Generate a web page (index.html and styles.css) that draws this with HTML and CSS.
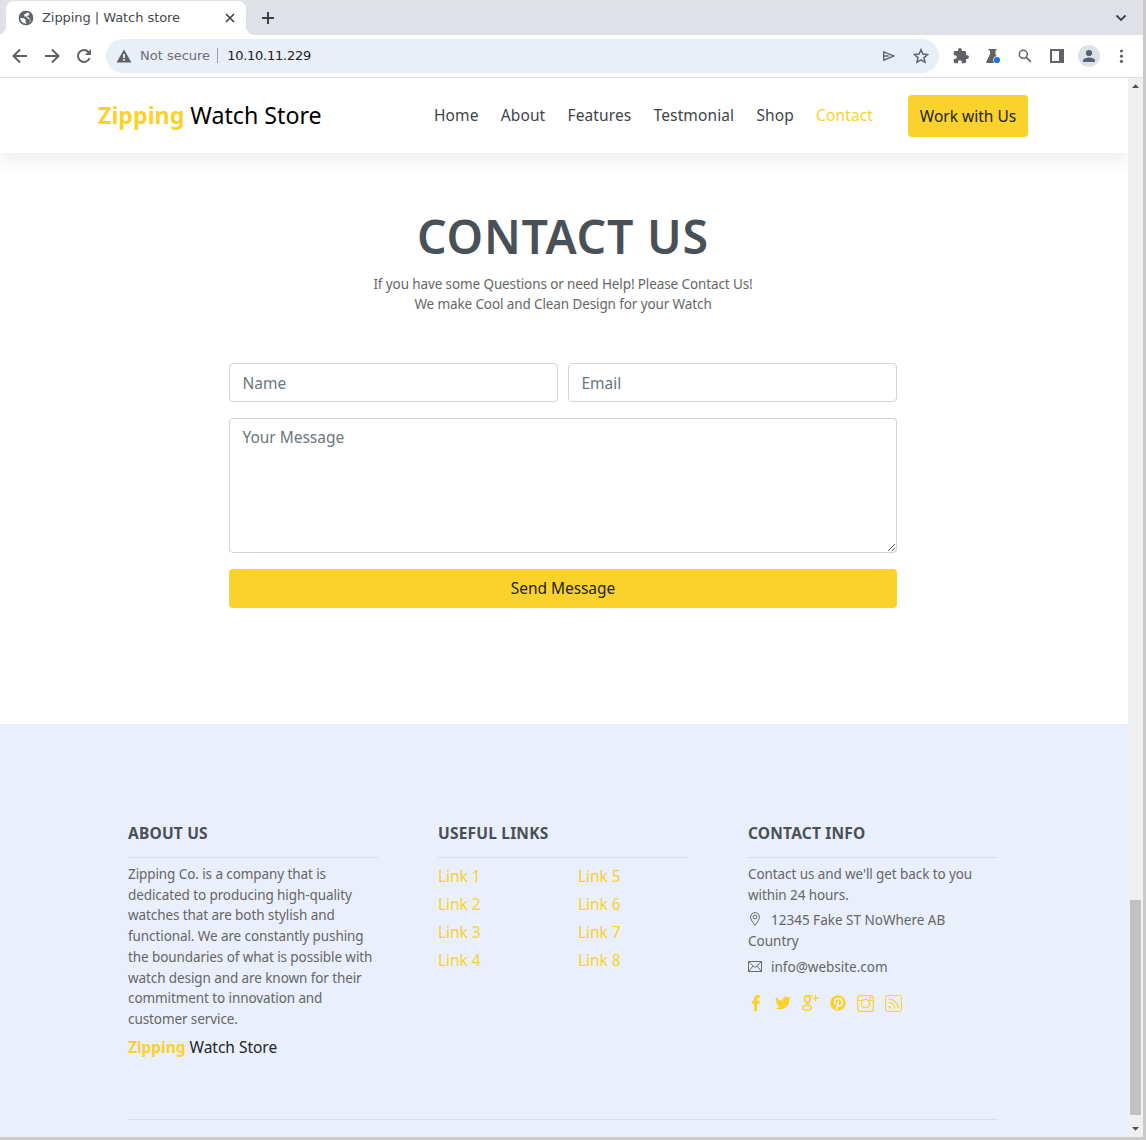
FILE: index.html
```html
<!DOCTYPE html>
<html lang="en">
<head>
<meta charset="utf-8">
<title>Zipping | Watch store</title>
<link rel="stylesheet" href="styles.css">
</head>
<body>
<div class="window">
  <div class="tabstrip">
    <div class="tab">
      <svg class="globe" width="16" height="16" viewBox="0 0 16 16"><circle cx="8" cy="8" r="7.2" fill="#5f6368"/><path d="M9.5 1.2 8.3 3.6 6.4 4.3 6.2 6.5 8.2 6.6 9.6 8.4 12 9.4 11.8 11.6 10.600 13.400 13.200 11.500 11.200 7.800 9.400 7 8.800 5.800 10.800 5.600 11.4 4.2 11.400 2z" fill="#fff"/><path d="M1.6 7.8 5.6 8.3 7.6 9.6 7.5 11.4 8.500 13.800 5.6 14.2 3 12.5z" fill="#fff"/><circle cx="8" cy="8" r="6.5" fill="none" stroke="#5f6368" stroke-width="1.500"/></svg>
      <span class="tab-title">Zipping | Watch store</span>
      <svg class="tab-close" width="10" height="10" viewBox="0 0 10 10"><path d="M1 1l8 8M9 1L1 9" stroke="#3c4043" stroke-width="1.6"/></svg>
    </div>
    <svg class="tab-new" width="14" height="14" viewBox="0 0 14 14"><path d="M7 1v12M1 7h12" stroke="#3c4043" stroke-width="2"/></svg>
    <svg class="tab-search" width="12" height="8" viewBox="0 0 12 8"><path d="M1.5 1.5 6 6l4.500-4.500" fill="none" stroke="#3c4043" stroke-width="1.8"/></svg>
  </div>
  <div class="toolbar">
    <svg class="nav-ic" width="16" height="16" viewBox="0 0 16 16"><path d="M15 8H2M8 1.500 1.500 8 8 14.500" fill="none" stroke="#5f6368" stroke-width="2"/></svg>
    <svg class="nav-ic" width="16" height="16" viewBox="0 0 16 16"><path d="M1 8h13M8 1.500 14.500 8 8 14.500" fill="none" stroke="#5f6368" stroke-width="2"/></svg>
    <svg class="nav-ic" width="16" height="16" viewBox="0 0 16 16"><path d="M13.600 10A6 6 0 1 1 12.500 4" fill="none" stroke="#5f6368" stroke-width="2"/><path d="M15 1v6H9z" fill="#5f6368"/></svg>
    <div class="omnibox">
      <svg width="16" height="14" viewBox="0 0 16 14"><path d="M8 .5 15.500 13.500H.5z" fill="#5f6368"/><path d="M7.200 5h1.600v4H7.200zM7.200 10h1.600v1.700H7.200z" fill="#fff"/></svg>
      <span class="insecure">Not secure</span>
      <span class="url">10.10.11.229</span>
      <svg class="send" width="12" height="10" viewBox="0 0 12 10"><path d="M.7.8 11 5 .7 9.200z M.7 5h5" fill="none" stroke="#5f6368" stroke-width="1.400"/></svg>
      <svg width="16" height="16" viewBox="0 0 24 24"><path d="M12 2.500 14.800 9l7 .7-5.300 4.700 1.500 7L12 17.700 6 21.400l1.500-7L2.200 9.700l7-.7z" fill="none" stroke="#5f6368" stroke-width="2.200"/></svg>
    </div>
    <div class="actions">
      <svg width="16" height="16" viewBox="1 1 22 22"><path d="M20.500 11H19V7c0-1.100-.9-2-2-2h-4V3.500a2.500 2.500 0 0 0-5 0V5H4c-1.100 0-2 .9-2 2v3.800h1.500a2.700 2.700 0 0 1 0 5.400H2V20c0 1.100.9 2 2 2h3.800v-1.500a2.700 2.700 0 0 1 5.400 0V22H17c1.100 0 2-.9 2-2v-4h1.500a2.500 2.500 0 0 0 0-5z" fill="#5f6368"/></svg>
      <svg width="16" height="16" viewBox="0 0 16 16"><path d="M3.500 1h8v1.500h-1V6l3.500 8q.3 1-.8 1H2Q.9 15 1.200 14L5 6V2.500H3.500z" fill="#5f6368"/><circle cx="12" cy="12" r="3.700" fill="#fff"/><circle cx="12" cy="12" r="3.100" fill="#1a73e8"/></svg>
      <svg width="16" height="16" viewBox="0 0 16 16"><circle cx="6.300" cy="6.300" r="4" fill="none" stroke="#5f6368" stroke-width="1.500"/><path d="M9.300 9.300 13.800 13.800" stroke="#5f6368" stroke-width="1.700"/></svg>
      <svg width="16" height="16" viewBox="0 0 16 16"><path d="M1 1h14v14H1zM3 3v10h7V3z" fill="#5f6368" fill-rule="evenodd"/></svg>
      <span class="avatar"><svg width="14" height="14" viewBox="0 0 14 14"><circle cx="7" cy="4" r="3.100" fill="#56617a"/><path d="M1 13v-1.500C1 9.500 4.500 8.500 7 8.500s6 1 6 3V13z" fill="#56617a"/></svg></span>
      <svg width="16" height="16" viewBox="0 0 16 16" fill="#5f6368"><circle cx="8.500" cy="3" r="1.600"/><circle cx="8.500" cy="8.200" r="1.600"/><circle cx="8.500" cy="13.400" r="1.600"/></svg>
    </div>
  </div>
  <div class="viewport">
    <div class="page">
      <header class="site-header">
        <a class="logo"><b>Zipping</b> Watch Store</a>
        <nav class="menu">
          <a>Home</a><a>About</a><a>Features</a><a>Testmonial</a><a>Shop</a><a class="active">Contact</a>
        </nav>
        <a class="cta">Work with Us</a>
      </header>
      <main class="contact">
        <h1>CONTACT US</h1>
        <p class="lead">If you have some Questions or need Help! Please Contact Us!<br>We make Cool and Clean Design for your Watch</p>
        <form class="form">
          <input class="field" type="text" placeholder="Name">
          <input class="field" type="text" placeholder="Email">
          <textarea class="field message" placeholder="Your Message"></textarea>
          <button class="submit" type="button">Send Message</button>
        </form>
      </main>
      <footer class="footer">
        <div class="columns">
          <section>
            <h2>ABOUT US</h2>
            <p>Zipping Co. is a company that is<br>dedicated to producing high-quality<br>watches that are both stylish and<br>functional. We are constantly pushing<br>the boundaries of what is possible with<br>watch design and are known for their<br>commitment to innovation and<br>customer service.</p>
            <a class="brand"><b>Zipping</b> Watch Store</a>
          </section>
          <section>
            <h2>USEFUL LINKS</h2>
            <div class="links">
              <a>Link 1</a><a>Link 5</a><a>Link 2</a><a>Link 6</a><a>Link 3</a><a>Link 7</a><a>Link 4</a><a>Link 8</a>
            </div>
          </section>
          <section>
            <h2>CONTACT INFO</h2>
            <p>Contact us and we'll get back to you<br>within 24 hours.</p>
            <p class="info"><svg width="14" height="14" viewBox="0 0 14 14" fill="none" stroke="#6b6b6b"><path d="M7 13.400C5 10.500 2.600 7.800 2.600 5a4.400 4.400 0 0 1 8.800 0c0 2.800-2.400 5.500-4.400 8.400z"/><circle cx="7" cy="5" r="1.900"/></svg>12345 Fake ST NoWhere AB<br>Country</p>
            <p class="info"><svg width="14" height="14" viewBox="0 0 14 14" fill="none" stroke="#6b6b6b"><path d="M.5 2.500h13v10H.5zM.5 2.500 7 8.500l6.500-6M.5 12.500 5 7M13.500 12.500 9 7"/></svg>info@website.com</p>
            <div class="social">
              <svg width="16" height="16" viewBox="0 0 16 16"><path d="M6 16V8.700H3.900V5.800H6V4c0-2.600 1.300-4 3.700-4h2v2.900h-1.400c-.9 0-1.200.4-1.200 1.200v1.700h2.600l-.3 2.900H9.100V16z" fill="#fbd12b"/></svg>
              <svg width="16" height="16" viewBox="0 0 24 24"><path d="M24 4.600a10 10 0 0 1-2.800.8 5 5 0 0 0 2.100-2.700c-1 .6-2 1-3.100 1.200a4.900 4.900 0 0 0-8.400 4.500C7.700 8.100 4.100 6.100 1.700 3.200a4.900 4.900 0 0 0 1.500 6.500 4.900 4.900 0 0 1-2.200-.6c0 2.300 1.600 4.400 3.900 4.900a5 5 0 0 1-2.200.1 4.900 4.900 0 0 0 4.600 3.400A9.900 9.900 0 0 1 0 19.500a14 14 0 0 0 7.600 2.200c9.100 0 14.300-7.700 14-14.600A10 10 0 0 0 24 4.600z" fill="#fbd12b"/></svg>
              <svg width="17" height="16" viewBox="0 0 17 16" fill="none" stroke="#fbd12b"><ellipse cx="5.300" cy="4.200" rx="2.900" ry="3.300" stroke-width="1.700"/><path d="M6 .7h4.500M6.500 7.400c-1.900 1.200-1 2 .5 2.700 1.900.9 2.500 1.700 2.300 2.800-.3 1.500-2.100 2.300-4.300 2.300-2.600 0-4.200-.8-4.200-2.300 0-2 2.900-2.900 5.600-2.700" stroke-width="1.400"/><path d="M13.500 0v6.400M10.500 3.200h6.200" stroke-width="1.200"/></svg>
              <svg width="16" height="16" viewBox="0 0 16 16"><circle cx="8" cy="8" r="7.800" fill="#fbd12b"/><path d="M5.100 9.400C3.500 6.500 5 3.600 8.300 3.600c2.600 0 4.100 1.700 3.900 3.900-.2 2.400-1.700 3.900-3.200 3.600-.8-.1-1.100-.5-1.300-1M8.400 6.300 6.400 14.800" fill="none" stroke="#e9effb" stroke-width="1.800"/></svg>
              <svg width="17" height="17" viewBox="0 0 17 17" fill="none" stroke="#fbd12b" stroke-width="1.200"><rect x=".6" y=".6" width="15.800" height="15.800" rx="3"/><circle cx="8.500" cy="8.500" r="4.200"/><path d="M.6 5.500h4.300M12.100 5.500h4.300"/><rect x="12.300" y="2.300" width="1.900" height="1.900" fill="#fbd12b" stroke="none"/></svg>
              <svg width="17" height="17" viewBox="0 0 17 17" fill="none" stroke="#fbd12b"><rect x=".6" y=".6" width="15.800" height="15.800" rx=".8"/><circle cx="4.700" cy="12.400" r="1.300" fill="#fbd12b" stroke="none"/><path d="M3.500 7.300a6.200 6.200 0 0 1 6.200 6.200M3.500 3.800a9.700 9.700 0 0 1 9.700 9.700" stroke-width="1.200"/></svg>
            </div>
          </section>
        </div>
        <div class="rule"></div>
      </footer>
    </div>
    <div class="scrollbar">
      <svg width="15" height="15" viewBox="0 0 15 15"><path d="M4 10h7L7.500 6.300z" fill="#505050"/></svg>
      <div class="thumb"></div>
      <svg width="15" height="15" viewBox="0 0 15 15"><path d="M4 5h7L7.500 8.800z" fill="#505050"/></svg>
    </div>
  </div>
</div>
</body>
</html>
```
FILE: styles.css
```css
* { box-sizing: border-box; }
body { margin: 0; font-family: "Noto Sans", sans-serif; }
svg { display: block; flex: none; }
a { white-space: nowrap; }

.window {
  width: 1146px;
  height: 1140px;
  border-right: 3px solid #cacaca;
  border-bottom: 3px solid #cacaca;
  display: flex;
  flex-direction: column;
  overflow: hidden;
  background: #fff;
}

/* Browser chrome */
.tabstrip {
  height: 35px;
  flex: none;
  display: flex;
  align-items: center;
  background: #dee1e6;
  border-top: 1px solid #e3e3e3;
  font-family: "DejaVu Sans", sans-serif;
}
.tab {
  position: relative;
  display: flex;
  align-items: center;
  width: 240px;
  height: 34px;
  margin-left: 6px;
  padding: 0 11px 0 12px;
  border-radius: 8px 8px 0 0;
  background: #fff;
}
.tab::before,
.tab::after {
  content: "";
  position: absolute;
  bottom: 0;
  width: 8px;
  height: 8px;
}
.tab::before { left: -8px; background: radial-gradient(circle at 0 0, #dee1e6 7.5px, #fff 8px); }
.tab::after { right: -8px; background: radial-gradient(circle at 100% 0, #dee1e6 7.5px, #fff 8px); }
.tab-title { margin: -2px 0 0 8px; font-size: 13px; letter-spacing: -.06px; color: #45494d; white-space: nowrap; }
.tab-close { margin-left: auto; }
.tab-new { margin-left: 15px; }
.tab-search { margin: 0 16px 0 auto; }

.toolbar {
  height: 43px;
  flex: none;
  display: flex;
  align-items: center;
  padding: 0 13px 1px 12px;
  border-bottom: 1px solid #dadce0;
  font-family: "DejaVu Sans", sans-serif;
  font-size: 13px;
}
.nav-ic { margin-right: 16px; }
.omnibox {
  display: flex;
  align-items: center;
  width: 833px;
  height: 34px;
  margin-left: -2px;
  padding: 0 10px;
  border-radius: 17px;
  background: #e9eef8;
}
.insecure {
  margin-left: 8px;
  padding-right: 7px;
  border-right: 1px solid #9aa0a6;
  color: #6b6f74;
  white-space: nowrap;
}
.url { margin-left: 9px; letter-spacing: -.25px; color: #202124; }
.send { margin: 0 18px 0 auto; }
.actions { display: flex; align-items: center; gap: 16px; margin-left: 14px; }
.avatar {
  display: flex;
  align-items: center;
  justify-content: center;
  width: 22px;
  height: 22px;
  margin: 0 -3px;
  border-radius: 50%;
  background: #dee1e6;
}

.viewport { flex: 1; display: flex; min-height: 0; }
.page { width: 1128px; display: flex; flex-direction: column; overflow: hidden; }
.scrollbar {
  width: 15px;
  display: flex;
  flex-direction: column;
  background: #f0f0f0;
}
.thumb { width: 11px; height: 215px; margin: auto 2px 7px; background: #c1c1c1; }

/* Site header */
.site-header {
  position: relative;
  height: 75px;
  flex: none;
  display: flex;
  align-items: center;
  padding: 0 100px 0 98px;
  background: #fff;
  box-shadow: 0 8px 16px rgba(33, 37, 41, .08);
}
.logo { margin-top: -2px; font-size: 23.2px; color: #000; }
.logo b, .brand b { color: #fbd12b; font-weight: 700; }
.menu {
  display: flex;
  gap: 22.200px;
  margin: -2px 0 0 auto;
  font-size: 15.5px;
  letter-spacing: .12px;
  color: #3d4349;
}
.active { color: #fbd12b; }
.cta {
  width: 120px;
  height: 42px;
  margin-left: 35px;
  border-radius: 4px;
  background: #fbd12b;
  color: #212529;
  font-size: 15.5px;
  line-height: 42px;
  text-align: center;
}

/* Contact form */
.contact { height: 571px; flex: none; padding: 53px 2px 0 0; text-align: center; }
h1 {
  margin: 0;
  font-size: 46.5px;
  font-weight: 600;
  line-height: 60px;
  letter-spacing: .75px;
  color: #495057;
}
.lead {
  margin: 8px 0 0;
  font-size: 13.5px;
  line-height: 20px;
  letter-spacing: -.11px;
  color: #666;
}
.form {
  display: grid;
  grid-template-columns: 1fr 1fr;
  gap: 16px 10px;
  width: 668px;
  margin: 49px auto 0;
}
.field, .submit {
  height: 39px;
  margin: 0;
  border-radius: 4px;
  font: 15.5px/24px "Noto Sans", sans-serif;
}
.field { padding: 6px 12.5px; border: 1px solid #ced4da; background: #fff; letter-spacing: -.03px; }
.field::placeholder { color: #6c757d; opacity: 1; }
.message { grid-column: 1 / -1; height: 135px; resize: vertical; }
.submit { grid-column: 1 / -1; padding: 0 0 2px; border: 0; background: #fbd12b; color: #212529; letter-spacing: -.05px; }

/* Footer */
.footer { flex: 1; padding: 97px 130px 0 128px; background: #e9effb; }
.columns { display: grid; grid-template-columns: repeat(3, 250px); gap: 60px; height: 298px; }
h2 {
  height: 37px;
  margin: 0 0 6px;
  border-bottom: 1px solid #dcdfe9;
  font-size: 15.5px;
  line-height: 24px;
  letter-spacing: .2px;
  color: #495057;
}
.footer p {
  margin: 0;
  font-size: 13.5px;
  line-height: 20.7px;
  letter-spacing: -.09px;
  color: #666;
  white-space: nowrap;
}
.brand { display: block; margin-top: 5px; font-size: 15.5px; line-height: 24px; letter-spacing: -.02px; color: #212529; }
.links {
  display: grid;
  grid-template-columns: 140px 110px;
  margin-top: -2px;
  font-size: 15.5px;
  line-height: 28px;
  letter-spacing: -.05px;
  color: #fbd12b;
}
.footer .info { margin-top: 5px; letter-spacing: 0; }
.info svg { display: inline-block; margin-right: 9px; vertical-align: -1px; }
.social { display: flex; align-items: center; gap: 11px; margin-top: 17px; }
.rule { height: 1px; background: #dcdfe9; }
```
